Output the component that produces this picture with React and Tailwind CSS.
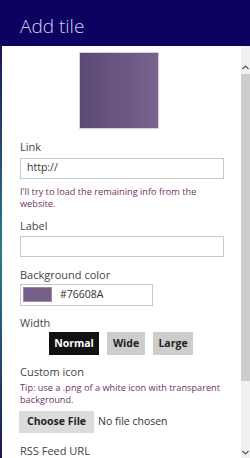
export default function App() {
  const font = { fontFamily: '"Segoe UI", "Open Sans", "Noto Sans", sans-serif' };

  return (
    <div className="w-[250px] h-[458px] overflow-hidden flex flex-col bg-white" style={font}>
      {/* header */}
      <div className="h-[46px] shrink-0 bg-[#0c0262] flex items-center px-[20px]">
        <h1 className="text-[19px] font-light text-[#d4d2ec] leading-none pt-[6px]">Add tile</h1>
      </div>

      <div className="flex flex-1 min-h-0">
        {/* strip of the page behind */}
        <div className="w-[2px] shrink-0 bg-gradient-to-b from-[#1c1457] via-[#2a7e8a] to-[#1a1650]" />

        {/* form */}
        <div className="flex-1 flex flex-col pl-[18px] pr-[17px] text-[#444]">
          <div className="mt-[6px] self-center -ml-[6px] w-[80px] h-[80px] border border-[#d7d0de] bg-gradient-to-r from-[#5b4a76] to-[#78638c]" />

          <label className="mt-[11px] text-[11px] leading-[14px]">Link</label>
          <div className="mt-[4px] h-[22px] border border-[#c9c9c9] flex items-center px-[6px] text-[10.5px] text-[#333]">
            http://
          </div>
          <p className="mt-[7px] text-[9.2px] leading-[12px] text-[#6e3463]">
            I'll try to load the remaining info from the website.
          </p>

          <label className="mt-[9px] text-[11px] leading-[14px]">Label</label>
          <div className="mt-[3px] h-[22px] border border-[#c9c9c9]" />

          <label className="mt-[11px] text-[11px] leading-[14px]">Background color</label>
          <div className="mt-[2px] w-[133px] h-[23px] border border-[#c9c9c9] flex items-center">
            <div className="ml-[2px] w-[29px] h-[15px] bg-[#76608A] border border-[#9a8aa8]" />
            <span className="ml-[8px] text-[10.5px] text-[#333]">#76608A</span>
          </div>

          <label className="mt-[10px] text-[11px] leading-[14px]">Width</label>
          <div className="mt-[2px] ml-[29px] flex gap-[8px] text-[10.5px] font-bold">
            <button className="h-[23px] w-[50px] bg-[#111] text-white">Normal</button>
            <button className="h-[23px] w-[38px] bg-[#cdcdcd] text-[#222]">Wide</button>
            <button className="h-[23px] w-[40px] bg-[#cdcdcd] text-[#222]">Large</button>
          </div>

          <label className="mt-[10px] text-[11px] leading-[14px]">Custom icon</label>
          <p className="mt-[3px] text-[9.2px] leading-[12px] text-[#6e3463]">
            Tip: use a .png of a white icon with transparent background.
          </p>
          <div className="mt-[5px] flex items-center">
            <div className="h-[22px] w-[75px] -ml-[1px] bg-[#dcdcdc] flex items-center justify-center text-[10.5px] font-bold text-[#222]">
              Choose File
            </div>
            <span className="ml-[4px] text-[10.5px] text-[#333]">No file chosen</span>
          </div>

          <label className="mt-[11px] text-[11px] leading-[14px]">RSS Feed URL</label>
        </div>

        {/* scrollbar */}
        <div className="w-[9px] shrink-0 bg-[#f0f0f0] flex flex-col items-center">
          <svg className="mt-[19px]" width="7" height="5" viewBox="0 0 7 5">
            <path d="M0.5 4 L3.5 1 L6.5 4" fill="none" stroke="#555" strokeWidth="1.2" />
          </svg>
          <div className="mt-[4px] w-full h-[307px] bg-[#cdcdcd]" />
          <div className="flex-1" />
          <svg className="mb-[3px]" width="7" height="5" viewBox="0 0 7 5">
            <path d="M0.5 1 L3.5 4 L6.5 1" fill="none" stroke="#555" strokeWidth="1.2" />
          </svg>
        </div>
      </div>
    </div>
  );
}
